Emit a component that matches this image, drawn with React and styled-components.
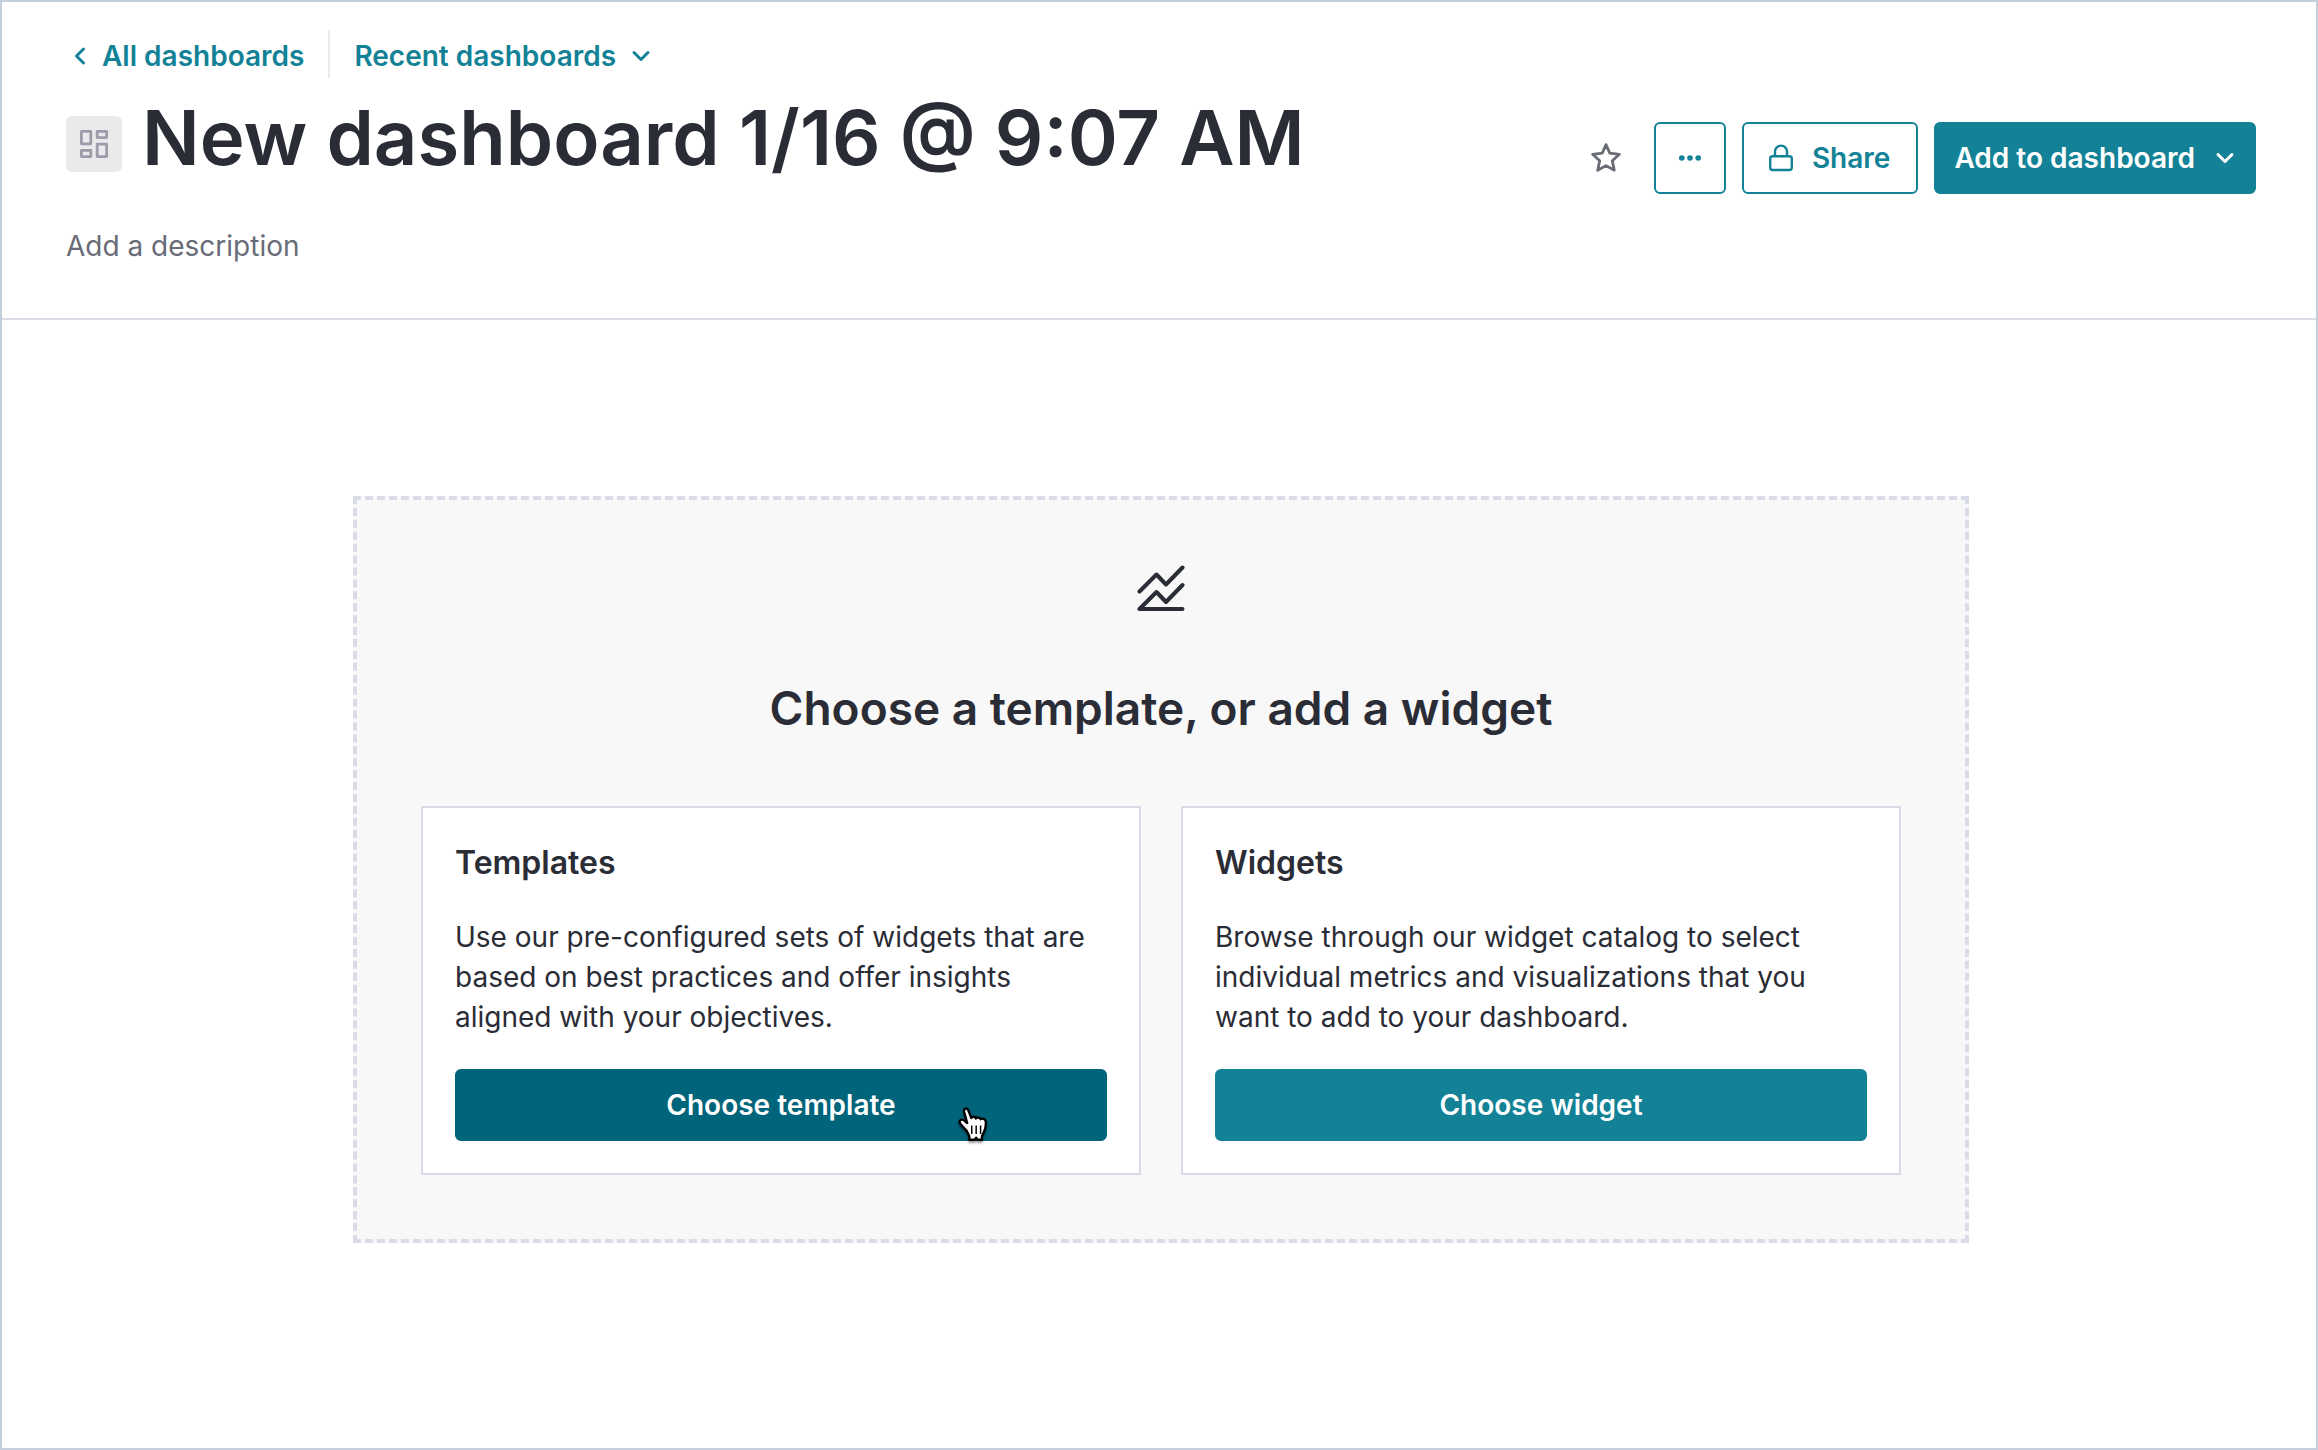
import React from "react";
import styled, { createGlobalStyle } from "styled-components";

const teal = "#138296";
const ink = "#2a2c36";
const line = "#d9dbe6";

const GlobalStyle = createGlobalStyle`
  *, *::before, *::after { box-sizing: border-box; }
  body {
    margin: 0;
    background: #fff;
    color: ${ink};
    font-family: Inter, "Liberation Sans", sans-serif;
    font-size: 28px;
    line-height: 40px;
  }
  h1, h2, h3, p { margin: 0; font-weight: 600; }
  svg { display: block; flex: none; }
`;

const Page = styled.div`
  min-height: 100vh;
  display: flex;
  flex-direction: column;
  border: 2px solid #c3d0dc;
`;

const Header = styled.header`
  display: flex;
  justify-content: space-between;
  align-items: flex-start;
  padding: 28px 60px 52px 64px;
  border-bottom: 2px solid ${line};
`;

const Intro = styled.div`
  display: flex;
  flex-direction: column;
`;

const Nav = styled.nav`
  display: flex;
  align-items: center;
  height: 48px;
`;

const BackLink = styled.a`
  display: flex;
  align-items: center;
  gap: 8px;
  padding: 4px 24px 0 0;
  color: ${teal};
  font-weight: 600;
  text-decoration: none;
`;

const RecentButton = styled.button`
  display: flex;
  align-items: center;
  gap: 11px;
  height: 48px;
  padding: 4px 0 0 24px;
  border: 0;
  border-left: 2px solid #e9eaf0;
  background: none;
  color: ${teal};
  font: inherit;
  font-weight: 600;
  cursor: pointer;
`;

const TitleRow = styled.div`
  display: flex;
  align-items: center;
  gap: 20px;
  height: 104px;
  margin-top: 14px;
`;

const Tile = styled.span`
  display: grid;
  place-items: center;
  width: 56px;
  height: 56px;
  border-radius: 6px;
  background: #eaeaec;
`;

const Title = styled.h1`
  padding-bottom: 14px;
  font-size: 76px;
  font-weight: 600;
  line-height: 92px;
  white-space: nowrap;
`;

const Description = styled.p`
  margin-top: 30px;
  color: #696b76;
  font-weight: 400;
`;

const Actions = styled.div`
  display: flex;
  align-items: center;
  gap: 16px;
  margin-top: 92px;
`;

const StarButton = styled.button`
  display: grid;
  place-items: center;
  width: 64px;
  height: 64px;
  padding: 0;
  border: 0;
  background: none;
  cursor: pointer;
`;

const Button = styled.button`
  display: flex;
  align-items: center;
  justify-content: center;
  gap: 16px;
  width: ${(p) => p.$width || "auto"};
  height: 72px;
  padding: ${(p) => p.$padding || "0"};
  border: 2px solid ${(p) => (p.$active ? "#00647a" : teal)};
  border-radius: 6px;
  background: ${(p) => (p.$outline ? "#fff" : p.$active ? "#00647a" : teal)};
  color: ${(p) => (p.$outline ? teal : "#fff")};
  font: inherit;
  font-weight: 600;
  white-space: nowrap;
  cursor: pointer;
`;

const Main = styled.main`
  flex: 1;
  display: flex;
  justify-content: center;
  align-items: flex-start;
  padding: 176px 60px 60px 64px;
`;

const Panel = styled.section`
  display: flex;
  flex-direction: column;
  align-items: center;
  width: 100%;
  max-width: 1616px;
  padding: 64px;
  border: 4px dashed ${line};
  background: #f8f8f8;
`;

const PanelTitle = styled.h2`
  margin: 62px 0 64px;
  font-size: 46px;
  line-height: 68px;
`;

const Cards = styled.div`
  display: grid;
  grid-template-columns: 1fr 1fr;
  gap: 40px;
  width: 100%;
`;

const Card = styled.article`
  display: flex;
  flex-direction: column;
  padding: 32px;
  border: 2px solid ${line};
  background: #fff;
`;

const CardTitle = styled.h3`
  font-size: 32px;
  line-height: 45px;
`;

const CardText = styled.p`
  flex: 1;
  margin: 32px 0;
  font-weight: 400;
`;

const ButtonSlot = styled.div`
  position: relative;
`;

const Pointer = styled.svg`
  position: absolute;
  left: 501px;
  top: 36px;
  pointer-events: none;
  filter: drop-shadow(0 2px 1px rgba(0, 0, 0, 0.4));
`;

const ChevronDown = () => (
  <svg width="28" height="28" viewBox="0 0 28 28" fill="none" stroke="currentColor" strokeWidth="3" strokeLinecap="round" strokeLinejoin="round" aria-hidden="true">
    <path d="M7 10.500l7 7 7-7" />
  </svg>
);

const ChevronLeft = () => (
  <svg width="28" height="28" viewBox="0 0 28 28" fill="none" stroke="currentColor" strokeWidth="3" strokeLinecap="round" strokeLinejoin="round" aria-hidden="true">
    <path d="M17.500 7l-7 7 7 7" />
  </svg>
);

const DashboardIcon = () => (
  <svg width="28" height="28" viewBox="0 0 28 28" fill="none" stroke="#9b9da8" strokeWidth="2.8" strokeLinejoin="round" aria-hidden="true">
    <path d="M1.400 1.400h9.400v12.400H1.400zM17.200 1.400h9.400v6.200h-9.400zM1.400 20.400h9.400v6.200H1.400zM17.200 14.200h9.400v12.400h-9.400z" />
  </svg>
);

const Star = () => (
  <svg width="32" height="32" viewBox="0 0 32 32" fill="none" stroke="#696b76" strokeWidth="2.8" strokeLinejoin="round" aria-hidden="true">
    <path d="M16 2.600l3.800 8.600 9.600 1.100-7.100 6.400 2 9.500L16 23.600l-8.300 4.600 2-9.500-7.100-6.400 9.600-1.100z" />
  </svg>
);

const Dots = () => (
  <svg width="24" height="24" viewBox="0 0 24 24" fill="currentColor" aria-hidden="true">
    <circle cx="3.8" cy="12" r="2.8" />
    <circle cx="12" cy="12" r="2.8" />
    <circle cx="20.2" cy="12" r="2.8" />
  </svg>
);

const Lock = () => (
  <svg width="28" height="28" viewBox="0 0 28 28" fill="none" stroke="currentColor" strokeWidth="2.4" aria-hidden="true">
    <rect x="2.200" y="12.200" width="21.600" height="13.800" rx="2.400" />
    <path d="M7 12V7.600a6 6 0 0 1 12 0V12" />
  </svg>
);

const ChartIcon = () => (
  <svg width="48" height="48" viewBox="0 0 48 48" fill="none" stroke={ink} strokeWidth="4" strokeLinecap="round" strokeLinejoin="round" aria-hidden="true">
    <path d="M2.500 27.500L19.500 10.500l9.500 10L45.500 3.500" />
    <path d="M45.500 21L29 38l-9.500-10L2.500 45h43" />
  </svg>
);

const HandPointer = () => (
  <Pointer width="34" height="40" viewBox="0 0 32 38" aria-hidden="true">
    <path
      d="M10 24.500L4.500 18.500C1.800 15.600 4 13 6.800 14.200L10.500 17.200 7.600 6.600C6.800 3.200 10.400 2 11.600 5.200L14.400 12.500C15.200 10.600 18.400 10.800 18.700 12.800 19.800 11.300 22.700 11.700 23.200 13.500 24.600 12.400 28 13 28.200 16 28.400 20.500 27.800 23.500 26 26.500L24.500 29.500V33H20.500L19 31 17.500 33H12.500V29.500Z"
      fill="#fff" stroke="#000" strokeWidth="2.200" strokeLinejoin="round"
    />
    <path d="M14.800 19.500v8M19 19.500v8M23.200 19.500v8" stroke="#000" strokeWidth="1.400" />
  </Pointer>
);

export default function App() {
  return (
    <>
      <GlobalStyle />
      <Page>
        <Header>
          <Intro>
            <Nav>
              <BackLink href="#dashboards"><ChevronLeft />All dashboards</BackLink>
              <RecentButton type="button">Recent dashboards<ChevronDown /></RecentButton>
            </Nav>
            <TitleRow>
              <Tile><DashboardIcon /></Tile>
              <Title>New dashboard 1/16 @ 9:07 AM</Title>
            </TitleRow>
            <Description>Add a description</Description>
          </Intro>
          <Actions>
            <StarButton type="button" aria-label="Favorite"><Star /></StarButton>
            <Button type="button" $outline $width="72px" aria-label="More options"><Dots /></Button>
            <Button type="button" $outline $padding="0 26px 0 24px"><Lock />Share</Button>
            <Button type="button" $padding="0 15px 0 18px">Add to dashboard<ChevronDown /></Button>
          </Actions>
        </Header>
        <Main>
          <Panel>
            <ChartIcon />
            <PanelTitle>Choose a template, or add a widget</PanelTitle>
            <Cards>
              <Card>
                <CardTitle>Templates</CardTitle>
                <CardText>
                  Use our pre-configured sets of widgets that are based on best practices and offer insights aligned with your objectives.
                </CardText>
                <ButtonSlot>
                  <Button type="button" $active $width="100%">Choose template</Button>
                  <HandPointer />
                </ButtonSlot>
              </Card>
              <Card>
                <CardTitle>Widgets</CardTitle>
                <CardText>
                  Browse through our widget catalog to select individual metrics and visualizations that you want to add to your dashboard.
                </CardText>
                <Button type="button" $width="100%">Choose widget</Button>
              </Card>
            </Cards>
          </Panel>
        </Main>
      </Page>
    </>
  );
}
